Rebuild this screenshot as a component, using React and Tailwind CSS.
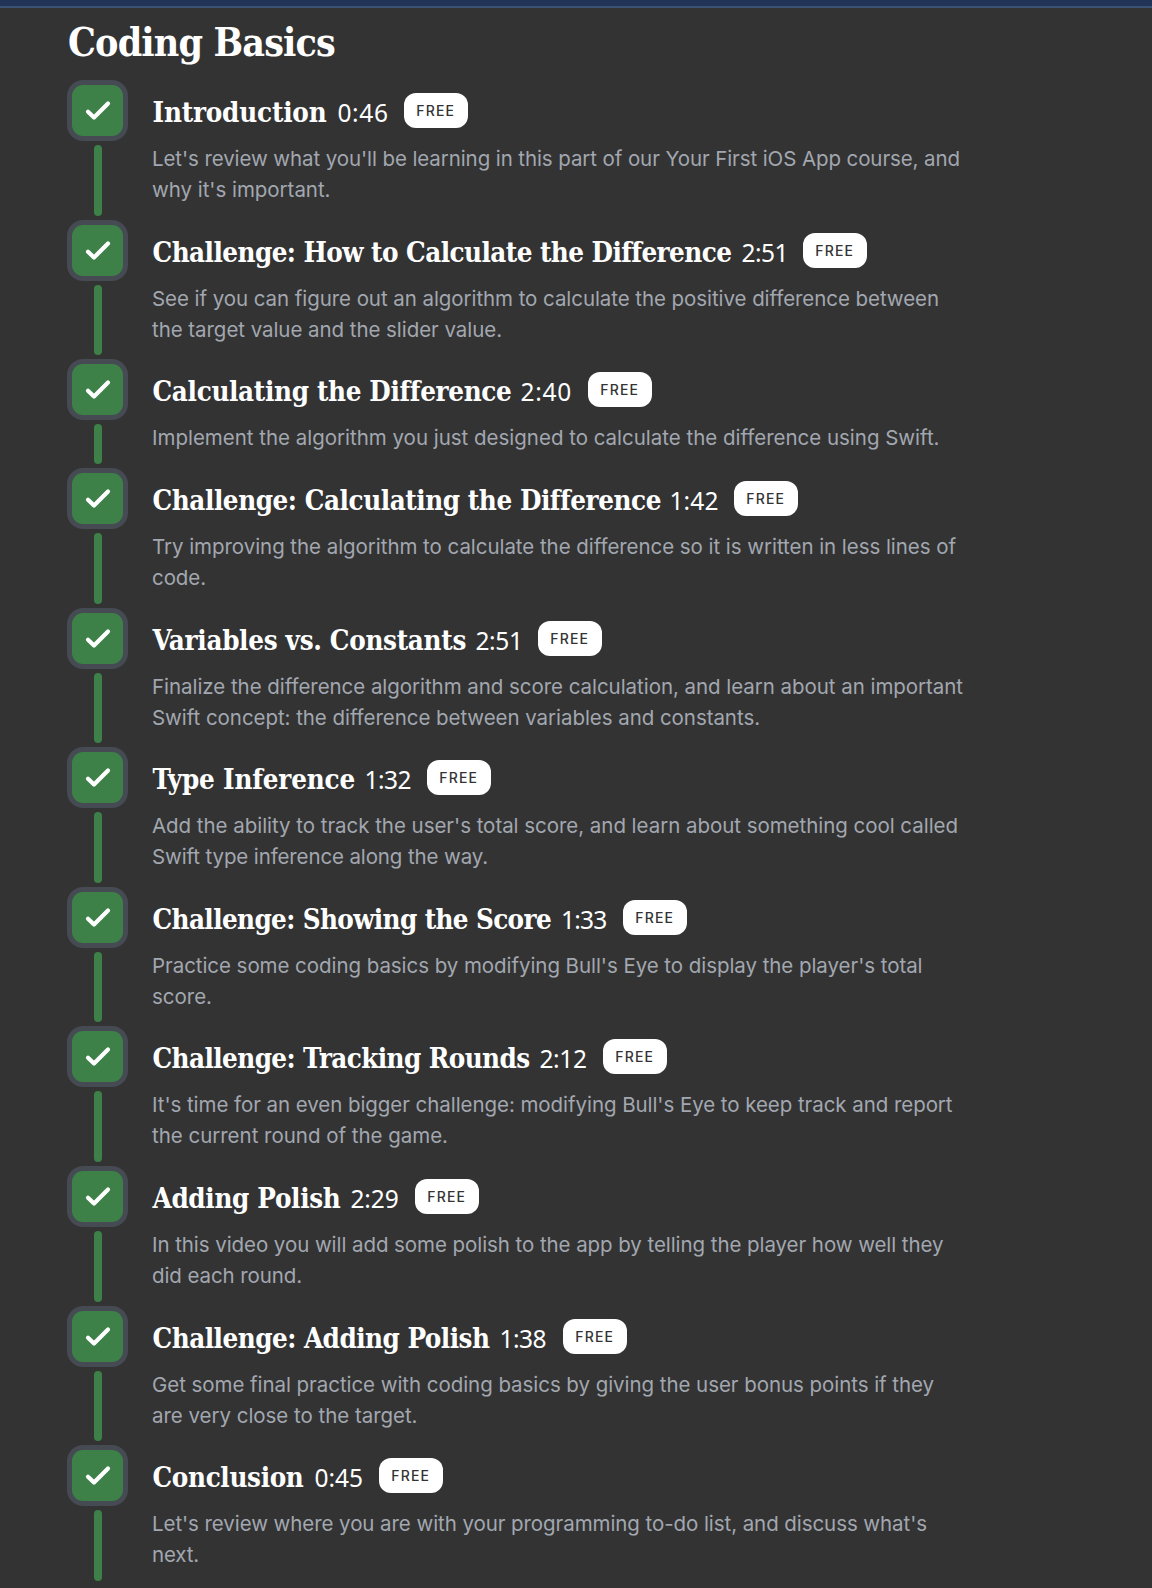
import { useLayoutEffect, useRef, useState } from "react";

const episodes = [
  { title: "Introduction", titleW: 174, time: "0:46", timeX: 185, timeW: 49, badgeX: 251.5, lines: [["Let's review what you'll be learning in this part of our Your First iOS App course, and", 808], ["why it's important.", 178.5]] },
  { title: "Challenge: How to Calculate the Difference", titleW: 578, time: "2:51", timeX: 589, timeW: 44.5, badgeX: 650.5, lines: [["See if you can figure out an algorithm to calculate the positive difference between", 787], ["the target value and the slider value.", 350]] },
  { title: "Calculating the Difference", titleW: 358, time: "2:40", timeX: 368, timeW: 49.5, badgeX: 435.5, lines: [["Implement the algorithm you just designed to calculate the difference using Swift.", 787.5]] },
  { title: "Challenge: Calculating the Difference", titleW: 507.5, time: "1:42", timeX: 517, timeW: 47, badgeX: 581.5, lines: [["Try improving the algorithm to calculate the difference so it is written in less lines of", 804], ["code.", 54]] },
  { title: "Variables vs. Constants", titleW: 313.5, time: "2:51", timeX: 323, timeW: 45, badgeX: 385.5, lines: [["Finalize the difference algorithm and score calculation, and learn about an important", 811], ["Swift concept: the difference between variables and constants.", 608]] },
  { title: "Type Inference", titleW: 202.5, time: "1:32", timeX: 212, timeW: 44.5, badgeX: 274.5, lines: [["Add the ability to track the user's total score, and learn about something cool called", 806], ["Swift type inference along the way.", 336]] },
  { title: "Challenge: Showing the Score", titleW: 398.5, time: "1:33", timeX: 408.5, timeW: 43.5, badgeX: 470.5, lines: [["Practice some coding basics by modifying Bull's Eye to display the player's total", 770.5], ["score.", 60]] },
  { title: "Challenge: Tracking Rounds", titleW: 377, time: "2:12", timeX: 387, timeW: 45, badgeX: 450.5, lines: [["It's time for an even bigger challenge: modifying Bull's Eye to keep track and report", 800.5], ["the current round of the game.", 296]] },
  { title: "Adding Polish", titleW: 188, time: "2:29", timeX: 198, timeW: 46, badgeX: 262.5, lines: [["In this video you will add some polish to the app by telling the player how well they", 791.5], ["did each round.", 150]] },
  { title: "Challenge: Adding Polish", titleW: 337, time: "1:38", timeX: 347, timeW: 44.5, badgeX: 410.5, lines: [["Get some final practice with coding basics by giving the user bonus points if they", 782], ["are very close to the target.", 265.5]] },
  { title: "Conclusion", titleW: 151, time: "0:45", timeX: 162, timeW: 46.5, badgeX: 226.5, lines: [["Let's review where you are with your programming to-do list, and discuss what's", 775], ["next.", 47]] },
];

// Tracks the text out or in so that it fills the given width.
function Fit({ width, className, children }) {
  const ref = useRef(null);
  const [spacing, setSpacing] = useState(0);
  useLayoutEffect(() => {
    const natural = ref.current.getBoundingClientRect().width;
    setSpacing((width - natural) / children.length);
  }, []);
  return (
    <span ref={ref} className={`inline-block whitespace-pre ${className || ""}`} style={{ letterSpacing: `${spacing}px` }}>
      {children}
    </span>
  );
}

function Marker() {
  return (
    <div className="flex w-[61px] flex-col items-center self-stretch">
      <div className="flex size-[61px] shrink-0 items-center justify-center rounded-[16px] border-[5px] border-[#454a53] bg-[#454a53]">
        <div className="size-[51px] shrink-0 rounded-[11px] bg-[#3d8149]">
          <svg className="size-[51px]" viewBox="0 0 51 51" fill="none" stroke="#fff" strokeWidth="4.2" strokeLinecap="round" strokeLinejoin="round">
            <path d="M16 26.7 L22 32.5 L36 18.6" />
          </svg>
        </div>
      </div>
      <div className="my-1 w-2 flex-1 rounded-full bg-[#3d8149]" />
    </div>
  );
}

function Episode({ e }) {
  return (
    <li className={`flex ${e.lines.length > 1 ? "h-[139.65px]" : "h-[108.65px]"}`}>
      <Marker />
      <div className="ml-6 min-w-0 flex-1">
        <div className="flex h-[61px] items-start pt-[13px]">
          <div className="flex shrink-0 pt-px pl-[0.5px]" style={{ width: e.timeX + 0.5 }}>
            <Fit width={e.titleW} className="font-['DejaVu_Serif_Condensed','DejaVu_Serif',serif] text-[27.5px] leading-[36px] font-bold text-white [font-stretch:condensed]">{e.title}</Fit>
          </div>
          <div className="shrink-0 pt-0.5" style={{ width: e.badgeX - e.timeX - 0.5 }}>
            <Fit width={e.timeW + 2} className="font-['Noto_Sans',sans-serif] text-[24.5px] leading-[36px] text-white">{e.time}</Fit>
          </div>
          <span className="flex h-[35px] w-16 shrink-0 items-center justify-center rounded-[12px] bg-white pl-[0.5px] font-['Inter',sans-serif] text-[14px] font-medium tracking-[1.2px] text-[#333]">FREE</span>
        </div>
        <p className="pt-[2px] font-['Inter',sans-serif] text-[20.5px] leading-[31px] text-[#a2a7b0]">
          {e.lines.map(([text, w]) => (
            <span key={text} className="block h-[31px]"><Fit width={w}>{text}</Fit></span>
          ))}
        </p>
      </div>
    </li>
  );
}

export default function App() {
  return (
    <main className="h-[1588px] overflow-hidden bg-[#333333]">
      <div className="h-2 border-b-2 border-[#3c5275] bg-[#213357]" />
      <h1 className="h-[71.95px] pt-[9px] pl-[68px]">
        <Fit width={267} className="font-['DejaVu_Serif_Condensed','DejaVu_Serif',serif] text-[39px] leading-[50px] font-bold text-white [font-stretch:condensed]">Coding Basics</Fit>
      </h1>
      <ul className="pl-[67px]">
        {episodes.map((e) => <Episode key={e.title} e={e} />)}
      </ul>
    </main>
  );
}
